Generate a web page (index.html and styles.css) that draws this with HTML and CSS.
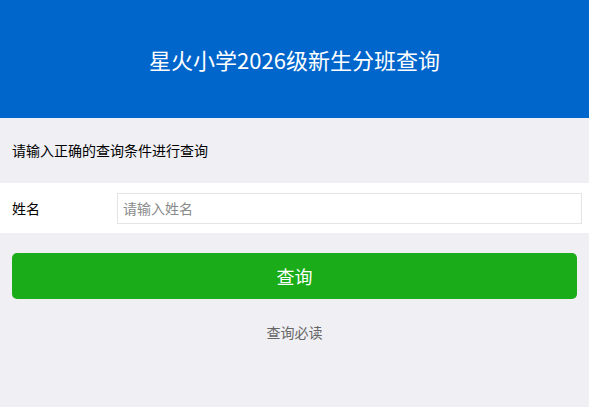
FILE: index.html
```html
<!DOCTYPE html>
<html lang="zh-CN">
<head>
    <meta charset="UTF-8">
    <meta name="viewport" content="width=device-width, initial-scale=1.0">
    <title>星火小学2026级新生分班查询</title>
    <link rel="stylesheet" href="styles.css">
</head>
<body>
    <!-- 顶部标题 -->
    <header class="page-header">
        <h1 class="page-title">星火小学2026级新生分班查询</h1>
    </header>

    <p class="tips">请输入正确的查询条件进行查询</p>

    <!-- 查询表单 -->
    <form class="query-form" onsubmit="return false;">
        <div class="form-row">
            <label class="form-label" for="name">姓名</label>
            <input class="form-input" id="name" type="text" placeholder="请输入姓名">
        </div>
        <div class="btn-area">
            <button class="query-btn" type="submit">查询</button>
        </div>
    </form>

    <a href="#" class="notice-link">查询必读</a>
</body>
</html>
```

FILE: styles.css
```css
body {
    margin: 0;
    font-family: "Noto Sans CJK SC", "Noto Sans", sans-serif;
    background-color: #efeff4;
    color: #000;
}

.page-header {
    height: 118px;
    background-color: #0066cc;
    display: flex;
    justify-content: center;
    align-items: center;
}

.page-title {
    margin: 0;
    color: #fff;
    font-size: 22px;
    font-weight: normal;
}

.tips {
    margin: 0;
    padding: 0 12px;
    height: 65px;
    line-height: 65px;
    font-size: 14px;
}

.form-row {
    display: flex;
    align-items: center;
    height: 50px;
    padding: 0 7px 0 12px;
    background-color: #fff;
}

.form-label {
    width: 105px;
    font-size: 14px;
}

.form-input {
    flex: 1;
    height: 31px;
    box-sizing: border-box;
    padding: 0 5px;
    border: 1px solid #e5e5e5;
    font-family: inherit;
    font-size: 14px;
    outline: none;
}

.form-input::placeholder {
    color: #8a8a8a;
}

.btn-area {
    padding: 20px 12px 0;
}

.query-btn {
    display: block;
    width: 100%;
    height: 46px;
    border: none;
    border-radius: 5px;
    background-color: #1aad19;
    color: #fff;
    font-family: inherit;
    font-size: 18px;
    cursor: pointer;
}

.notice-link {
    display: block;
    margin-top: 22px;
    text-align: center;
    font-size: 14px;
    line-height: 22px;
    color: #666;
    text-decoration: none;
}
```
